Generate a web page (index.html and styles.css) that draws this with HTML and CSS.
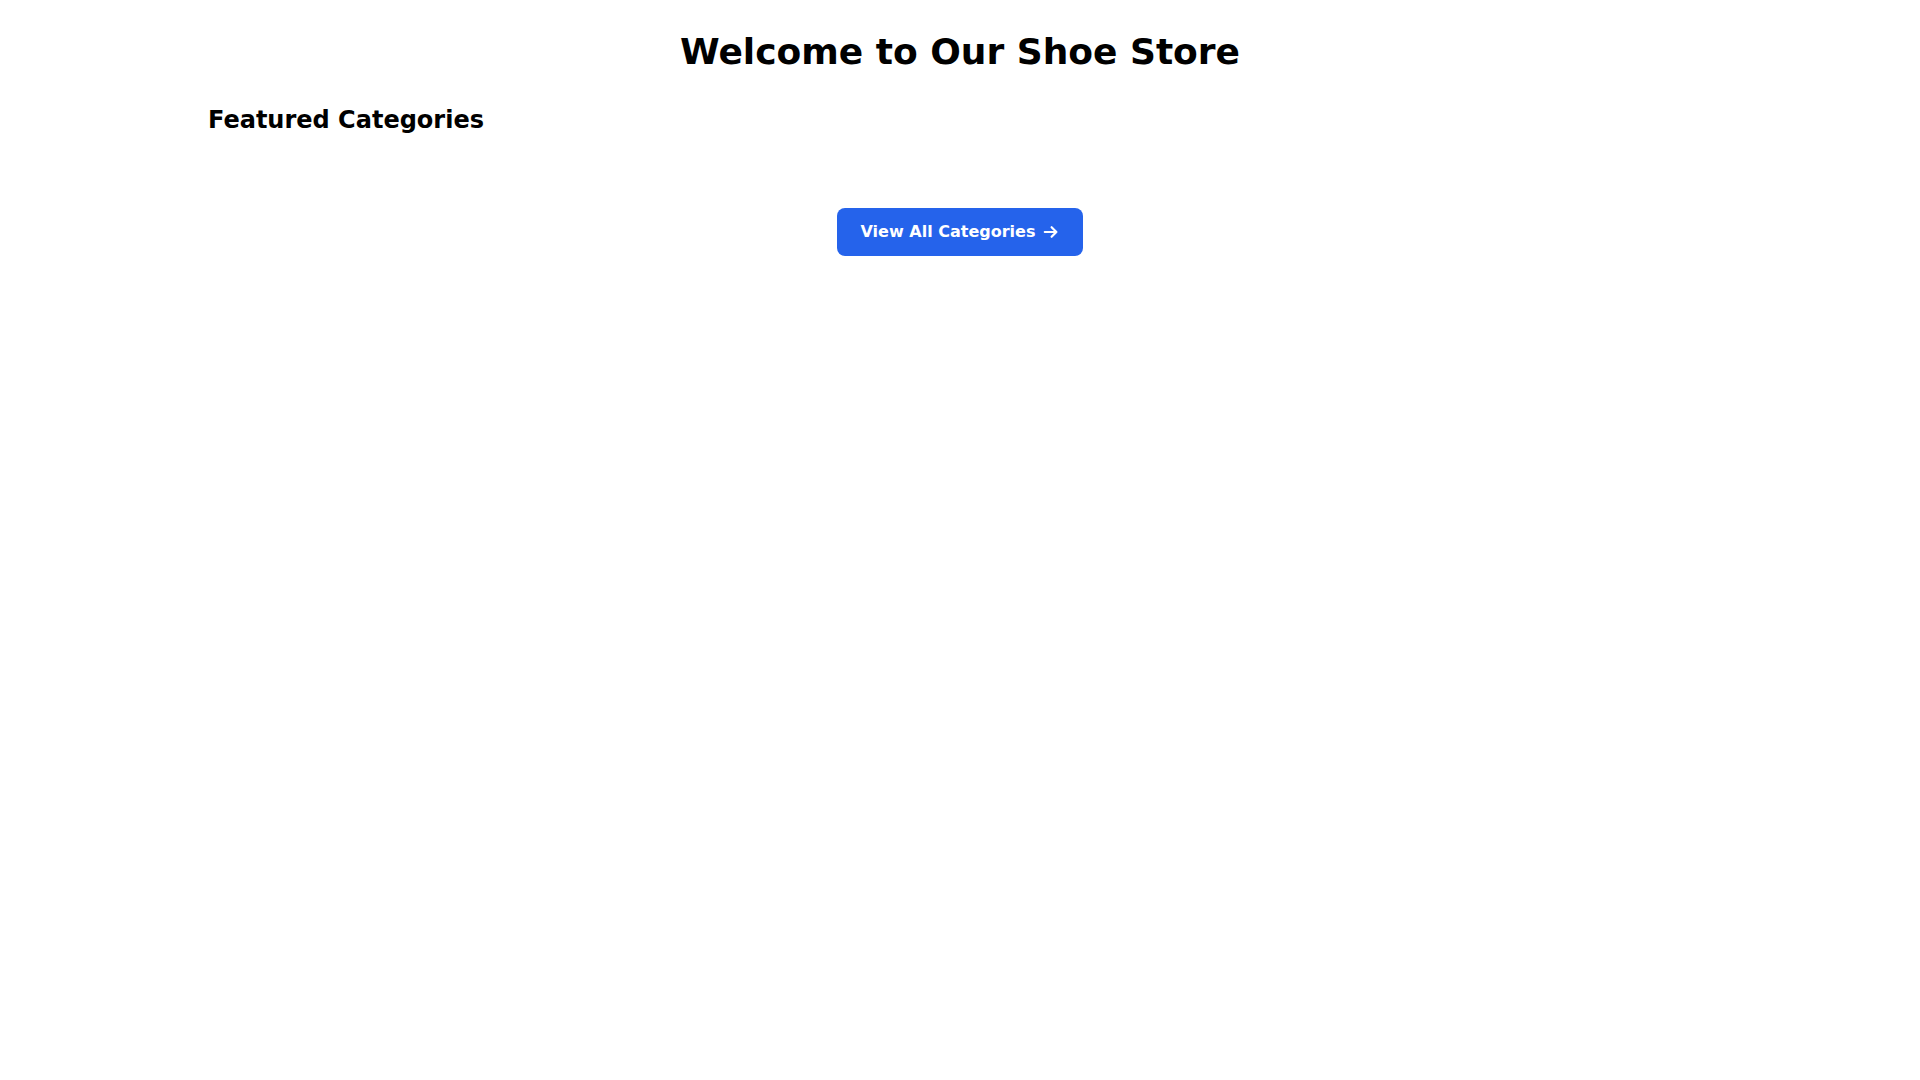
FILE: index.html
```html
<!DOCTYPE html>
<html lang="en">
<head>
<meta charset="utf-8">
<title>Shoe Store</title>
<link rel="stylesheet" href="styles.css">
</head>
<body>
<main class="container">
  <h1 class="page-title">Welcome to Our Shoe Store</h1>
  <section class="categories">
    <h2 class="section-title">Featured Categories</h2>
    <div class="category-grid"></div>
    <div class="actions">
      <a class="btn-primary" href="#">View All Categories
        <svg class="btn-icon" viewBox="0 0 16 16" aria-hidden="true"><path d="M1.8 8h11.6M8.6 3.2L13.4 8l-4.8 4.8" fill="none" stroke="currentColor" stroke-width="2.2" stroke-linecap="round" stroke-linejoin="round"/></svg>
      </a>
    </div>
  </section>
</main>
</body>
</html>
```
FILE: styles.css
```css
* { box-sizing: border-box; }
html, body { margin: 0; padding: 0; background: #ffffff; }
body {
  font-family: "DejaVu Sans", "Liberation Sans", sans-serif;
  color: #000;
}
.container {
  max-width: 1536px;
  margin: 0 auto;
  padding: 32px 16px;
}
.page-title {
  margin: 0 0 32px;
  font-size: 36px;
  line-height: 40px;
  font-weight: 700;
  text-align: center;
}
.section-title {
  margin: 0 0 24px;
  font-size: 24px;
  line-height: 32px;
  font-weight: 700;
}
.category-grid {
  display: grid;
  grid-template-columns: repeat(4, 1fr);
  gap: 24px;
}
.actions {
  margin-top: 48px;
  display: flex;
  justify-content: center;
}
.btn-primary {
  display: inline-flex;
  align-items: center;
  gap: 8px;
  padding: 12px 24px;
  background: #2563eb;
  color: #ffffff;
  font-size: 16px;
  line-height: 24px;
  font-weight: 700;
  text-decoration: none;
  border-radius: 8px;
}
.btn-icon {
  width: 16px;
  height: 16px;
}
```
